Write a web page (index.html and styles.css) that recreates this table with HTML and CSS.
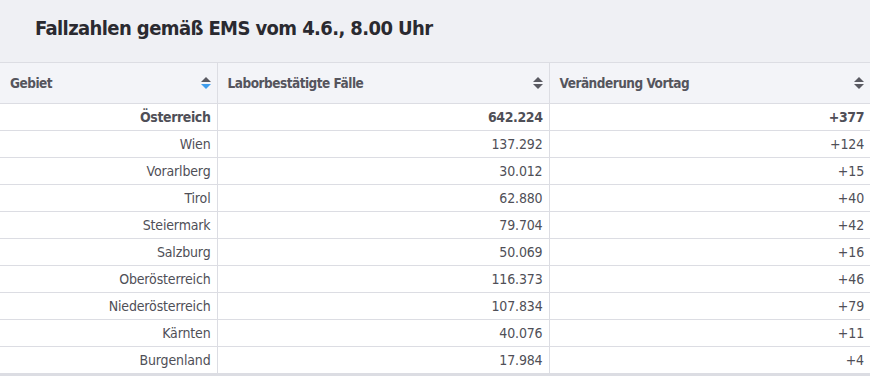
FILE: index.html
```html
<!DOCTYPE html>
<html lang="de">
<head>
<meta charset="utf-8">
<title>Fallzahlen</title>
<link rel="stylesheet" href="styles.css">
</head>
<body>
<div class="wrap">
  <h1 class="title">Fallzahlen gemäß EMS vom 4.6., 8.00 Uhr</h1>
  <table class="data">
    <colgroup>
      <col class="c1"><col class="c2"><col class="c3">
    </colgroup>
    <thead>
      <tr>
        <th><span class="th-in"><span>Gebiet</span><span class="sort active"><i class="up"></i><i class="down"></i></span></span></th>
        <th><span class="th-in"><span>Laborbestätigte Fälle</span><span class="sort"><i class="up"></i><i class="down"></i></span></span></th>
        <th><span class="th-in"><span>Veränderung Vortag</span><span class="sort"><i class="up"></i><i class="down"></i></span></span></th>
      </tr>
    </thead>
    <tbody>
      <tr class="total"><td>Österreich</td><td>642.224</td><td>+377</td></tr>
      <tr><td>Wien</td><td>137.292</td><td>+124</td></tr>
      <tr><td>Vorarlberg</td><td>30.012</td><td>+15</td></tr>
      <tr><td>Tirol</td><td>62.880</td><td>+40</td></tr>
      <tr><td>Steiermark</td><td>79.704</td><td>+42</td></tr>
      <tr><td>Salzburg</td><td>50.069</td><td>+16</td></tr>
      <tr><td>Oberösterreich</td><td>116.373</td><td>+46</td></tr>
      <tr><td>Niederösterreich</td><td>107.834</td><td>+79</td></tr>
      <tr><td>Kärnten</td><td>40.076</td><td>+11</td></tr>
      <tr><td>Burgenland</td><td>17.984</td><td>+4</td></tr>
    </tbody>
  </table>
</div>
</body>
</html>
```
FILE: styles.css
```css
html, body {
  margin: 0;
  padding: 0;
  background: #ffffff;
}
body {
  font-family: "DejaVu Sans Condensed", "Liberation Sans", sans-serif;
  color: #4d4d55;
}
.wrap {
  width: 870px;
}
.title {
  margin: 0;
  background: #eff0f4;
  height: 62px;
  box-sizing: border-box;
  padding: 14px 0 0 35px;
  font-size: 20px;
  letter-spacing: -0.6px;
  line-height: 28px;
  font-weight: 700;
  color: #2a2a30;
}
.data {
  width: 870px;
  border-collapse: collapse;
  table-layout: fixed;
  border-bottom: 3px solid #dcdde3;
}
.c1 { width: 217px; }
.c2 { width: 332px; }
.c3 { width: 321px; }
.data th {
  background: #f3f4f8;
  border-top: 1px solid #dcdde3;
  border-bottom: 1px solid #dcdde3;
  height: 40px;
  padding: 0 4px 0 10px;
  text-align: left;
  font-size: 13.5px;
  letter-spacing: -0.5px;
  font-weight: 700;
  color: #55555d;
}
.data th + th, .data td + td {
  border-left: 1px solid #dcdde3;
}
.th-in {
  display: flex;
  align-items: center;
  justify-content: space-between;
}
.sort {
  display: flex;
  flex-direction: column;
  gap: 2px;
  margin-right: 2px;
}
.sort i {
  display: block;
  width: 0;
  height: 0;
  border-left: 5px solid transparent;
  border-right: 5px solid transparent;
}
.sort .up { border-bottom: 5px solid #5a5a62; }
.sort .down { border-top: 5px solid #5a5a62; }
.sort.active .down { border-top-color: #3f9ded; }
.data td {
  height: 26px;
  padding: 0 6px 0 6px;
  border-bottom: 1px solid #dcdde3;
  text-align: right;
  font-size: 14px;
  letter-spacing: -0.15px;
  color: #4f4f57;
}
.data tr:last-child td {
  border-bottom: none;
}
.data .total td {
  font-weight: 700;
  letter-spacing: -0.4px;
}
```
